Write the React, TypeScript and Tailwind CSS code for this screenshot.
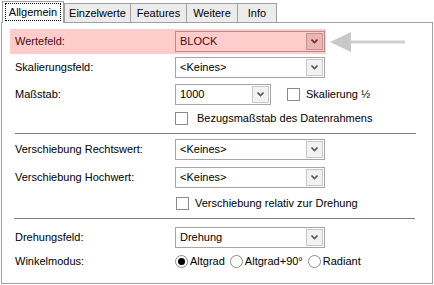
import React from "react";

const font = { fontFamily: '"Liberation Sans", Arial, sans-serif' };

function Chevron({ color }: { color: string }) {
  return (
    <svg width="7" height="5" viewBox="0 0 7 5">
      <path d="M0.5 0.5 L3.5 3.5 L6.5 0.5" fill="none" stroke={color} strokeWidth="1.6" />
    </svg>
  );
}

function Combo({ text, className, pink }: { text: string; className: string; pink?: boolean }) {
  return (
    <div
      className={
        "flex items-center h-[21px] border " +
        (pink ? "bg-[#ffcccc] border-[#b88a8a] text-[#4a0a0a] " : "bg-white border-[#a5a5a5] text-black ") +
        className
      }
    >
      <span className="flex-1 pl-[4px] leading-none">{text}</span>
      <div
        className={
          "mr-[1px] w-[17px] h-[17px] border flex items-center justify-center " +
          (pink ? "bg-[#ebb5b5] border-[#c49494]" : "bg-[#f2f2f2] border-[#c8c8c8]")
        }
      >
        <Chevron color={pink ? "#7a2a2a" : "#5a5a5a"} />
      </div>
    </div>
  );
}

function Check({ label, gap }: { label: string; gap: string }) {
  return (
    <div className={"flex items-center " + gap}>
      <div className="w-[13px] h-[13px] border border-[#8a8a8a] bg-white" />
      <span className="leading-none">{label}</span>
    </div>
  );
}

function Radio({ label, checked }: { label: string; checked?: boolean }) {
  return (
    <div className="flex items-center gap-[2px]">
      <div className="w-[13px] h-[13px] rounded-full border border-[#8a8a8a] bg-white flex items-center justify-center">
        {checked && <div className="w-[7px] h-[7px] rounded-full bg-black" />}
      </div>
      <span className="leading-none">{label}</span>
    </div>
  );
}

function Tab({ label, className }: { label: string; className: string }) {
  return (
    <div
      className={
        "h-[19px] border-t border-l border-r border-[#a0a0a0] bg-[#ececec] flex items-center justify-center " +
        className
      }
    >
      {label}
    </div>
  );
}

export default function App() {
  return (
    <div className="w-[434px] h-[285px] bg-white text-[11px] text-black" style={font}>
      <div className="flex items-end h-[22px] pl-[2px]">
        <div className="relative z-10 -mb-[1px] h-[22px] w-[62px] border-t border-l border-r border-[#a0a0a0] bg-white flex items-start justify-center pt-[1px]">
          <div className="border border-dotted border-black px-[3px] h-[18px] flex items-center">Allgemein</div>
        </div>
        <Tab label="Einzelwerte" className="w-[67px]" />
        <Tab label="Features" className="w-[56px] border-l-0" />
        <Tab label="Weitere" className="w-[51px] border-l-0" />
        <Tab label="Info" className="w-[39px] border-l-0" />
      </div>
      <div className="ml-[1px] w-[432px] h-[262px] border border-[#a0a0a0] flex flex-col">
        <div className="mt-[6px] flex items-center">
          <div className="ml-[8px] w-[316px] h-[25px] bg-[#ffcccc] pl-[5px] flex items-center text-[#4a0a0a]">
            <span className="w-[160px] leading-none">Wertefeld:</span>
            <Combo text="BLOCK" className="w-[150px]" pink />
          </div>
          <svg width="76" height="22" viewBox="0 0 76 22" className="ml-[4px]">
            <polygon points="0,11 21,1 21,21" fill="#c8c8c8" />
            <rect x="20" y="9.5" width="55" height="3" fill="#cfcfcf" />
          </svg>
        </div>
        <div className="mt-[3px] pl-[13px] flex items-center h-[21px]">
          <span className="w-[160px] leading-none">Skalierungsfeld:</span>
          <Combo text="<Keines>" className="w-[150px]" />
        </div>
        <div className="mt-[6px] pl-[13px] flex items-center h-[21px]">
          <span className="w-[160px] leading-none">Maßstab:</span>
          <Combo text="1000" className="w-[96px]" />
          <div className="ml-[16px]">
            <Check label="Skalierung ½" gap="gap-[6px]" />
          </div>
        </div>
        <div className="mt-[7px] pl-[173px] flex items-center h-[13px]">
          <Check label="Bezugsmaßstab des Datenrahmens" gap="gap-[9px]" />
        </div>
        <div className="mt-[8px] ml-[13px] w-[401px] h-px bg-[#7d7d7d]" />
        <div className="mt-[5px] pl-[13px] flex items-center h-[21px]">
          <span className="w-[160px] leading-none">Verschiebung Rechtswert:</span>
          <Combo text="<Keines>" className="w-[150px]" />
        </div>
        <div className="mt-[7px] pl-[13px] flex items-center h-[21px]">
          <span className="w-[160px] leading-none">Verschiebung Hochwert:</span>
          <Combo text="<Keines>" className="w-[150px]" />
        </div>
        <div className="mt-[9px] pl-[174px] flex items-center h-[13px]">
          <Check label="Verschiebung relativ zur Drehung" gap="gap-[6px]" />
        </div>
        <div className="mt-[8px] ml-[12px] w-[401px] h-px bg-[#7d7d7d]" />
        <div className="mt-[8px] pl-[13px] flex items-center h-[21px]">
          <span className="w-[160px] leading-none">Drehungsfeld:</span>
          <Combo text="Drehung" className="w-[150px]" />
        </div>
        <div className="mt-[6px] pl-[13px] flex items-center h-[14px]">
          <span className="w-[160px] leading-none">Winkelmodus:</span>
          <div className="flex items-center gap-[5px]">
            <Radio label="Altgrad" checked />
            <Radio label="Altgrad+90°" />
            <Radio label="Radiant" />
          </div>
        </div>
      </div>
    </div>
  );
}
